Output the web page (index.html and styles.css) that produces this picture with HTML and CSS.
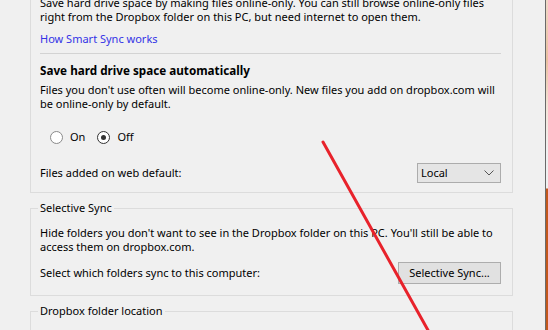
FILE: index.html
```html
<!DOCTYPE html>
<html lang="en">
<head>
    <meta charset="UTF-8">
    <title>Dropbox Preferences - Sync</title>
    <link rel="stylesheet" href="styles.css">
</head>
<body>
    <div class="window">
        <div class="pane">
            <fieldset class="group first">
                <p class="text">Save hard drive space by making files online-only. You can still browse online-only files right from the Dropbox folder on this PC, but need internet to open them.</p>
                <a class="link" href="#">How Smart Sync works</a>
                <hr class="sep">
                <h4 class="heading">Save hard drive space automatically</h4>
                <p class="text gap-s">Files you don't use often will become online-only. New files you add on dropbox.com will be online-only by default.</p>
                <div class="radios">
                    <label class="radio"><span class="dot"></span>On</label>
                    <label class="radio checked"><span class="dot"></span>Off</label>
                </div>
                <div class="row">
                    <span>Files added on web default:</span>
                    <div class="select">
                        <span>Local</span>
                        <svg width="10" height="6" viewBox="0 0 10 6"><path d="M0.5 0.5 L5 5 L9.5 0.5" fill="none" stroke="#555" stroke-width="1"/></svg>
                    </div>
                </div>
            </fieldset>

            <fieldset class="group">
                <legend>Selective Sync</legend>
                <p class="text">Hide folders you don't want to see in the Dropbox folder on this PC. You'll still be able to access them on dropbox.com.</p>
                <div class="row sync-row">
                    <span>Select which folders sync to this computer:</span>
                    <button class="btn">Selective Sync...</button>
                </div>
            </fieldset>

            <fieldset class="group">
                <legend>Dropbox folder location</legend>
                <p class="text">&nbsp;</p>
            </fieldset>
        </div>
        <div class="edge"></div>
    </div>

    <!-- red annotation stroke drawn over the dialog -->
    <svg class="mark" width="548" height="330" viewBox="0 0 548 330">
        <line x1="323" y1="142" x2="429" y2="332" stroke="#e8222b" stroke-width="3" stroke-linecap="round"/>
    </svg>
</body>
</html>
```

FILE: styles.css
```css
html, body {
    margin: 0;
    padding: 0;
    background: #f0f0f0;
    overflow: hidden;
}
body {
    font-family: "Noto Sans", "DejaVu Sans", sans-serif;
    font-size: 11px;
    line-height: 14px;
    color: #000;
    width: 548px;
    height: 330px;
    position: relative;
}
.window {
    display: flex;
    height: 330px;
}
.pane {
    width: 545px;
    padding-left: 30px;
    box-sizing: border-box;
}
.edge {
    width: 3px;
    border-left: 1px solid #6a6a6a;
    box-sizing: border-box;
    background: linear-gradient(#f0d9c8 0, #e9c0a0 60px, #f3e3d6 105px, #f0f0f0 150px, #f0f0f0 188px, #c2571c 189px, #c2571c 100%);
}
.group {
    width: 483px;
    box-sizing: border-box;
    margin: 8px 0 0 0;
    border: 1px solid #dcdcdc;
    padding: 11px 11px 11px 9px;
    min-width: 0;
}
.group legend {
    padding: 0 2px;
    margin-left: -2px;
    line-height: 14px;
}
.group.first {
    margin-top: -12px;
    padding-top: 7px;
    padding-bottom: 9px;
}
.text {
    margin: 0;
}
.gap-s {
    margin-top: 6px;
}
.link {
    display: block;
    margin-top: 8px;
    color: #3333e6;
    text-decoration: none;
}
.sep {
    margin: 7px 0 0 0;
    border: none;
    border-top: 1px solid #d3d3d3;
    height: 0;
}
.heading {
    margin: 9px 0 0 0;
    font-size: 11.7px;
    font-weight: bold;
}
.radios {
    display: flex;
    gap: 12px;
    margin-top: 19px;
    padding-left: 10px;
}
.radio {
    display: flex;
    align-items: center;
    gap: 7px;
}
.dot {
    width: 13px;
    height: 13px;
    border: 1px solid #8a8a8a;
    border-radius: 50%;
    background: #fff;
    box-sizing: border-box;
    position: relative;
}
.radio.checked .dot {
    border-color: #333;
}
.radio.checked .dot::after {
    content: "";
    position: absolute;
    left: 3px;
    top: 3px;
    width: 5px;
    height: 5px;
    border-radius: 50%;
    background: #333;
}
.row {
    display: flex;
    justify-content: space-between;
    align-items: center;
    margin-top: 19px;
}
.select {
    width: 84px;
    height: 20px;
    box-sizing: border-box;
    border: 1px solid #acacac;
    background: #e5e5e5;
    display: flex;
    align-items: center;
    justify-content: space-between;
    padding: 0 6px 0 3px;
}
.sync-row {
    margin-top: 8px;
}
.btn {
    width: 103px;
    height: 22px;
    font: inherit;
    color: #000;
    background: #e1e1e1;
    border: 1px solid #adadad;
    padding: 0;
}
.mark {
    position: absolute;
    left: 0;
    top: 0;
}
```
